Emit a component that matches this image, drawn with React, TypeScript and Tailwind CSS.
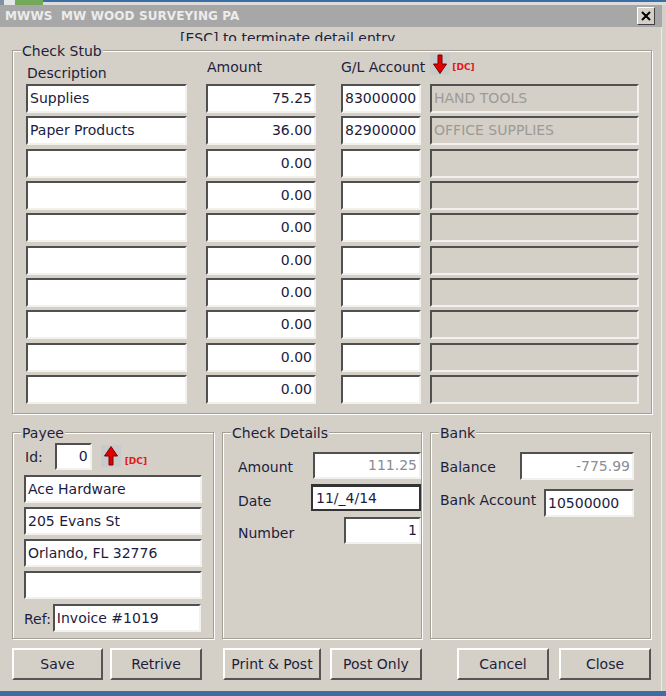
import React from "react";

const sunken =
  "border-2 border-t-[#505050] border-l-[#505050] border-r-[#f2f1ee] border-b-[#f2f1ee]";
const groupBox =
  "relative border border-[#a39f97] shadow-[inset_1px_1px_0_#ffffff,1px_1px_0_#ffffff]";
const raised =
  "border-2 border-t-[#ffffff] border-l-[#ffffff] border-r-[#555555] border-b-[#555555] bg-[#d4d0c8] flex items-center justify-center h-[32px] text-[#1e1e3c]";

function Field({
  text = "",
  right = false,
  disabled = false,
  gray = false,
  className = "",
}: {
  text?: string;
  right?: boolean;
  disabled?: boolean;
  gray?: boolean;
  className?: string;
}) {
  return (
    <div
      className={`${sunken} ${disabled ? "bg-[#d4d0c8] text-[#9c9a96]" : "bg-white"} ${
        gray && !disabled ? "text-[#8c8c94]" : ""
      } ${!gray && !disabled ? "text-[#1c1c40]" : ""} flex items-center px-[2px] overflow-hidden whitespace-nowrap leading-[17px] ${
        right ? "justify-end" : "justify-start"
      } ${className}`}
    >
      {text}
    </div>
  );
}

function Legend({ children }: { children: React.ReactNode }) {
  return (
    <span className="absolute -top-[8px] left-[8px] px-[1px] bg-[#d4d0c8] leading-[17px] text-[#1e1e3c]">
      {children}
    </span>
  );
}

function ArrowDown() {
  return (
    <svg width="20" height="22" viewBox="0 0 20 22" className="block">
      <rect x="0" y="0" width="20" height="22" fill="#c9cbcb" />
      <path d="M8 2 H12 V11 H16.5 L10 20.5 L3.5 11 H8 Z" fill="#e00000" stroke="#7a0000" strokeWidth="1" />
    </svg>
  );
}

function ArrowUp() {
  return (
    <svg width="20" height="22" viewBox="0 0 20 22" className="block">
      <rect x="0" y="0" width="20" height="22" fill="#c9cbcb" />
      <path d="M8 20 H12 V11 H16.5 L10 1.5 L3.5 11 H8 Z" fill="#e00000" stroke="#7a0000" strokeWidth="1" />
    </svg>
  );
}

const rows: [string, string, string, string][] = [
  ["Supplies", "75.25", "83000000", "HAND TOOLS"],
  ["Paper Products", "36.00", "82900000", "OFFICE SUPPLIES"],
  ["", "0.00", "", ""],
  ["", "0.00", "", ""],
  ["", "0.00", "", ""],
  ["", "0.00", "", ""],
  ["", "0.00", "", ""],
  ["", "0.00", "", ""],
  ["", "0.00", "", ""],
  ["", "0.00", "", ""],
];

export default function App() {
  return (
    <div className="w-[666px] h-[696px] bg-[#d4d0c8] flex flex-col overflow-hidden font-['DejaVu_Sans',sans-serif] text-[14px] text-[#1e1e3c]">
      {/* desktop strip */}
      <div className="h-[5px] flex shrink-0">
        <div className="w-[4px] bg-[#8290a4]" />
        <div className="w-[11px] bg-[#e4e6e8]" />
        <div className="w-[28px] bg-[#74a85a]" />
        <div className="flex-1 flex flex-col">
          <div className="h-[2px] bg-[#3a6ea5]" />
          <div className="h-[3px] bg-[#dcdcdc]" />
        </div>
      </div>

      {/* title bar */}
      <div className="h-[22px] shrink-0 bg-[#a7a7a7] flex items-center justify-between pl-[5px] pr-[7px] mr-[4px]">
        <span className="whitespace-pre font-bold text-[12px] text-[#ececec] tracking-[0.1px]">
          MWWS  MW WOOD SURVEYING PA
        </span>
        <div className="w-[18px] h-[18px] border border-t-[#ffffff] border-l-[#ffffff] border-r-[#404040] border-b-[#404040] bg-[#d4d0c8] flex items-center justify-center">
          <svg width="10" height="10" viewBox="0 0 10 10">
            <path d="M1 1 L9 9 M9 1 L1 9" stroke="#000" strokeWidth="2" />
          </svg>
        </div>
      </div>

      {/* body */}
      <div className="flex-1 flex flex-col pl-[12px] border-r border-r-[#ecebe8] mr-[4px]">
        <div className="h-[14px] overflow-hidden pl-[168px] pt-[3px] leading-[17px] whitespace-nowrap">
          [ESC] to terminate detail entry
        </div>

        {/* Check Stub */}
        <div className={`${groupBox} mt-[9px] w-[640px] h-[364px] pl-[13px] pt-[8px]`}>
          <Legend>Check Stub</Legend>
          <div className="h-[25px] flex items-start">
            <div className="w-[180px] pl-[1px] pt-[6px] leading-[17px]">Description</div>
            <div className="w-[135px] pl-[1px] leading-[17px]">Amount</div>
            <div className="leading-[17px]">G/L Account</div>
            <div className="ml-[5px] -mt-[6px]">
              <ArrowDown />
            </div>
            <div className="ml-[2px] mt-[3px] text-[9px] font-bold text-[#e01818] leading-[11px]">[DC]</div>
          </div>
          <div className="flex flex-col gap-[3.33px]">
            {rows.map((r, i) => (
              <div key={i} className="flex h-[29px]">
                <Field text={r[0]} className="w-[161px]" />
                <Field text={r[1]} right className="w-[110px] ml-[19px]" />
                <Field text={r[2]} className="w-[80px] ml-[25px]" />
                <Field text={r[3]} disabled className="w-[209px] ml-[9px]" />
              </div>
            ))}
          </div>
        </div>

        {/* lower groups */}
        <div className="mt-[18px] flex h-[207px]">
          {/* Payee */}
          <div className={`${groupBox} w-[202px] h-[207px] pl-[11px] pt-[10px]`}>
            <Legend>Payee</Legend>
            <div className="flex items-start h-[27px]">
              <div className="ml-[1px] mt-[6px] leading-[17px]">Id:</div>
              <Field text="0" right className="ml-[12px] w-[37px] h-[27px]" />
              <div className="ml-[9px] mt-[2px]">
                <ArrowUp />
              </div>
              <div className="ml-[4px] mt-[13px] text-[9px] font-bold text-[#e01818] leading-[11px]">[DC]</div>
            </div>
            <div className="mt-[5px] flex flex-col gap-[4px]">
              <Field text="Ace Hardware" className="w-[178px] h-[28px]" />
              <Field text="205 Evans St" className="w-[178px] h-[28px]" />
              <Field text="Orlando, FL 32776" className="w-[178px] h-[28px]" />
              <Field text="" className="w-[178px] h-[28px]" />
            </div>
            <div className="mt-[5px] flex items-center">
              <div className="leading-[17px] pt-[2px]">Ref:</div>
              <Field text="Invoice #1019" className="ml-[2px] w-[148px] h-[28px]" />
            </div>
          </div>

          {/* Check Details */}
          <div className={`${groupBox} ml-[8px] w-[200px] h-[207px] pl-[15px] pt-[19px]`}>
            <Legend>Check Details</Legend>
            <div className="flex justify-between items-center h-[27px]">
              <div className="leading-[17px] pt-[3px]">Amount</div>
              <Field text="111.25" right gray className="w-[108px] h-[27px]" />
            </div>
            <div className="mt-[5px] flex justify-between items-center h-[27px]">
              <div className="leading-[17px] pt-[8px]">Date</div>
              <div className="w-[110px] h-[27px] border-2 border-[#333333] border-t-[3px] bg-white flex items-center px-[3px] leading-[17px] text-[#1c1c40]">
                11/_4/14
              </div>
            </div>
            <div className="mt-[6px] flex justify-between items-center h-[27px]">
              <div className="leading-[17px] pt-[5px]">Number</div>
              <Field text="1" right className="w-[77px] h-[27px]" />
            </div>
          </div>

          {/* Bank */}
          <div className={`${groupBox} ml-[8px] w-[221px] h-[207px] pl-[9px] pr-[16px] pt-[19px]`}>
            <Legend>Bank</Legend>
            <div className="flex justify-between items-center h-[28px]">
              <div className="leading-[17px] pt-[3px]">Balance</div>
              <Field text="-775.99" right gray className="w-[114px] h-[28px]" />
            </div>
            <div className="mt-[9px] flex justify-between items-center h-[28px]">
              <div className="leading-[17px] -mt-[6px]">Bank Account</div>
              <Field text="10500000" className="w-[90px] h-[28px]" />
            </div>
          </div>
        </div>

        {/* buttons */}
        <div className="mt-[9px] flex">
          <div className={`${raised} w-[91px]`}>Save</div>
          <div className={`${raised} w-[92px] ml-[7px]`}>Retrive</div>
          <div className={`${raised} w-[98px] ml-[21px]`}>Print &amp; Post</div>
          <div className={`${raised} w-[92px] ml-[9px]`}>Post Only</div>
          <div className={`${raised} w-[92px] ml-[35px]`}>Cancel</div>
          <div className={`${raised} w-[92px] ml-[10px]`}>Close</div>
        </div>
      </div>

      {/* desktop bottom strip */}
      <div className="h-[5px] shrink-0 bg-[#3a6ea5]" />
    </div>
  );
}
